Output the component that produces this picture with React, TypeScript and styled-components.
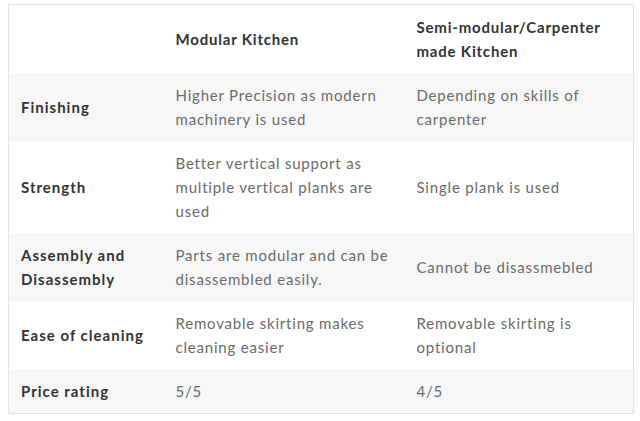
import React from "react";
import styled, { createGlobalStyle } from "styled-components";

const GlobalStyle = createGlobalStyle`
	body {
		margin: 4px 0 0 8px;
		background: #ffffff;
		font-family: "Lato", "Open Sans", sans-serif;
	}
`;

const Table = styled.table`
	width: 626px;
	border-collapse: collapse;
	border: 1px solid #e4e4e4;
	box-shadow: 0 0 1px rgba(0, 0, 0, 0.06);
	table-layout: fixed;
	font-size: 15px;
	line-height: 24px;
	letter-spacing: 0.8px;
`;

const Row = styled.tr<{ $shaded?: boolean }>`
	background: ${(props) => (props.$shaded ? "#f7f7f7" : "#ffffff")};
`;

const HeadCell = styled.th`
	padding: 10px 12px;
	text-align: left;
	vertical-align: middle;
	font-weight: 700;
	color: #333333;
`;

const LabelCell = styled.td`
	padding: 10px 12px;
	vertical-align: middle;
	font-weight: 700;
	color: #333333;
	letter-spacing: 1px;
`;

const Cell = styled.td`
	padding: 10px 12px;
	vertical-align: middle;
	color: #6b6b6b;
`;

const ROWS = [
	["Finishing", "Higher Precision as modern machinery is used", "Depending on skills of carpenter"],
	["Strength", "Better vertical support as multiple vertical planks are used", "Single plank is used"],
	["Assembly and Disassembly", "Parts are modular and can be disassembled easily.", "Cannot be disassmebled"],
	["Ease of cleaning", "Removable skirting makes cleaning easier", "Removable skirting is optional"],
	["Price rating", "5/5", "4/5"],
];

const App = () => {
	return (
		<>
			<GlobalStyle />
			<Table>
				<colgroup>
					<col style={{ width: 155 }} />
					<col style={{ width: 241 }} />
					<col />
				</colgroup>
				<thead>
					<Row>
						<HeadCell />
						<HeadCell>Modular Kitchen</HeadCell>
						<HeadCell>Semi-modular/Carpenter made Kitchen</HeadCell>
					</Row>
				</thead>
				<tbody>
					{ROWS.map((row, index) => (
						<Row key={row[0]} $shaded={index % 2 === 0}>
							<LabelCell>{row[0]}</LabelCell>
							<Cell>{row[1]}</Cell>
							<Cell>{row[2]}</Cell>
						</Row>
					))}
				</tbody>
			</Table>
		</>
	);
};

export default App;
